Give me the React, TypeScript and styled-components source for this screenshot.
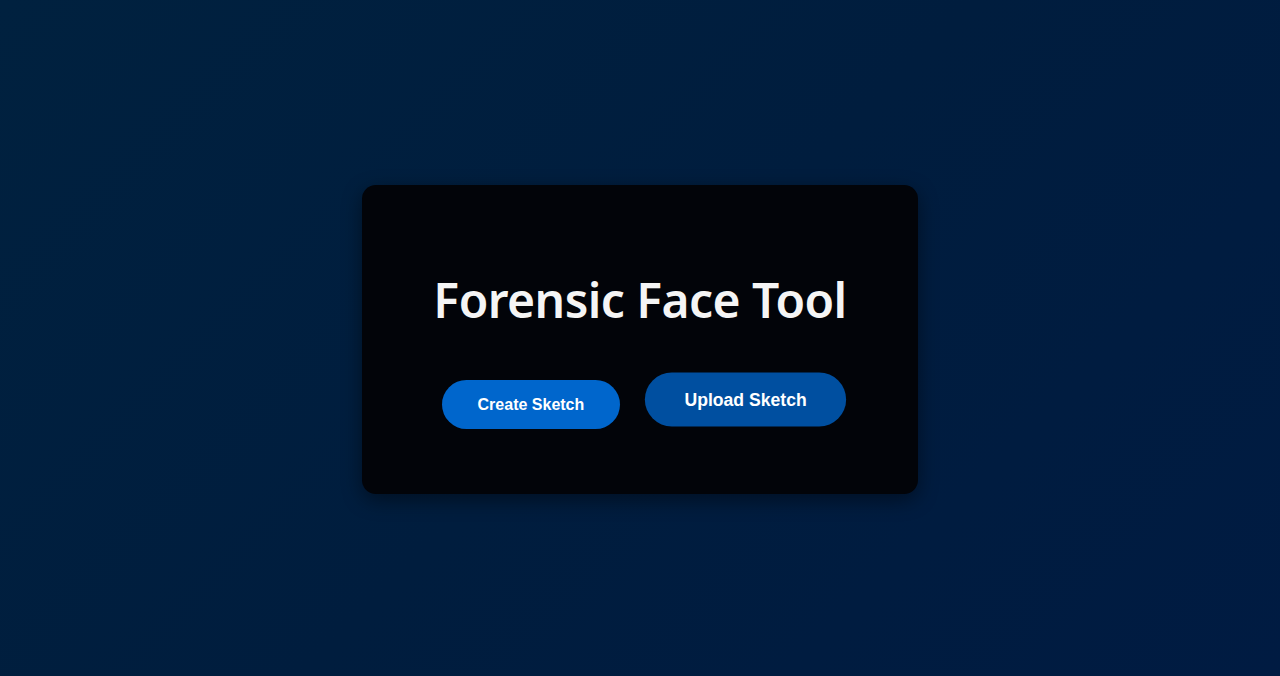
import React from "react";
import styled, { createGlobalStyle } from "styled-components";

const GlobalStyle = createGlobalStyle`
  html, body {
    margin: 0;
    padding: 0;
    height: 100%;
  }
  body {
    background: linear-gradient(135deg, #00213f 0%, #001d3e 50%, #001b42 100%);
    font-family: "Liberation Sans", Arial, sans-serif;
  }
  #root {
    height: 100%;
  }
`;

const Page = styled.div`
  min-height: 676px;
  display: flex;
  align-items: center;
  justify-content: center;
`;

const Card = styled.div`
  width: 556px;
  height: 309px;
  box-sizing: border-box;
  margin-top: 3px;
  background: #020409;
  border-radius: 14px;
  box-shadow: 0 6px 20px rgba(0, 0, 0, 0.45);
  display: flex;
  flex-direction: column;
  align-items: center;
  padding-top: 83px;
`;

const Title = styled.h1`
  margin: 0;
  font-family: "Noto Sans", "Open Sans", sans-serif;
  font-weight: 600;
  font-size: 48px;
  line-height: 64px;
  letter-spacing: -0.55px;
  color: #f5f5f5;
`;

const Actions = styled.div`
  display: flex;
  align-items: center;
  gap: 34px;
  margin-top: 48px;
  margin-left: -1px;
`;

const Button = styled.button<{ $tone: "primary" | "secondary"; $raised?: boolean }>`
  border: none;
  border-radius: 30px;
  padding: 15px 36px;
  font-family: "Liberation Sans", Arial, sans-serif;
  font-weight: 700;
  font-size: 16px;
  line-height: 19px;
  color: #ffffff;
  cursor: pointer;
  background: ${(p) => (p.$tone === "primary" ? "#0066cc" : "#004fa0")};
  transform: ${(p) => (p.$raised ? "translateY(-5px) scale(1.1)" : "none")};
`;

export default function App() {
  return (
    <>
      <GlobalStyle />
      <Page>
        <Card>
          <Title>Forensic Face Tool</Title>
          <Actions>
            <Button $tone="primary">Create Sketch</Button>
            <Button $tone="secondary" $raised>
              Upload Sketch
            </Button>
          </Actions>
        </Card>
      </Page>
    </>
  );
}
